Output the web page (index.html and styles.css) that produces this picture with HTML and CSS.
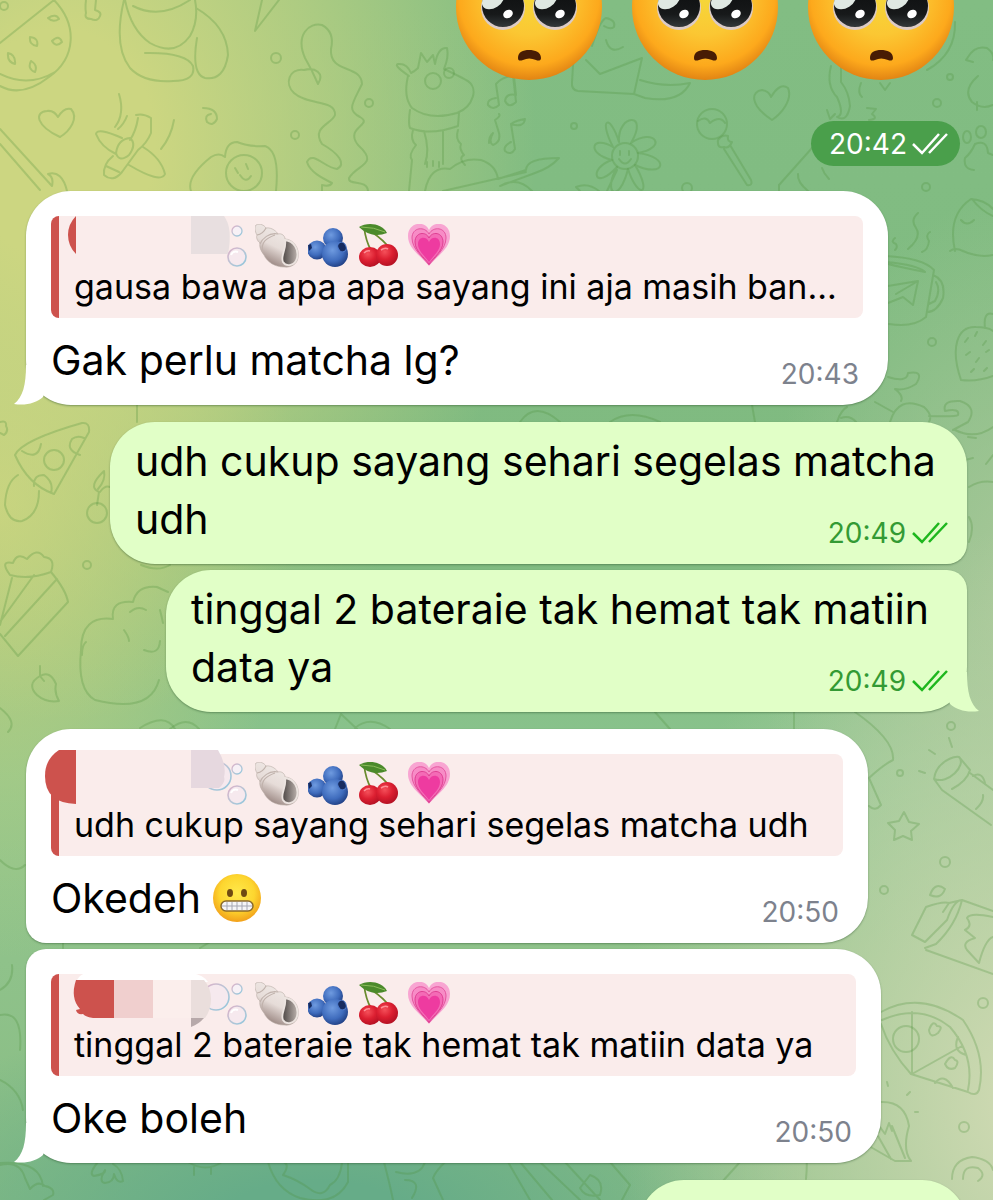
FILE: index.html
```
<!DOCTYPE html>
<html lang="id">
<head>
<meta charset="utf-8">
<meta name="viewport" content="width=device-width, initial-scale=1">
<title>Chat</title>
<link rel="stylesheet" href="styles.css">
</head>
<body>
<svg class="defs" width="0" height="0" aria-hidden="true">
  <defs>
    <radialGradient id="skin" cx=".5" cy=".42" r=".6">
      <stop offset="0" stop-color="#f5d83a"/><stop offset=".45" stop-color="#fbc733"/><stop offset=".8" stop-color="#fda91c"/><stop offset="1" stop-color="#dc7d12"/>
    </radialGradient>
    <linearGradient id="eye" x1="0" y1="0" x2="0" y2="1">
      <stop offset="0" stop-color="#0b0d0e"/><stop offset=".7" stop-color="#17191a"/><stop offset="1" stop-color="#33383a"/>
    </linearGradient>
    <radialGradient id="smile" cx=".5" cy=".4" r=".6">
      <stop offset="0" stop-color="#ffe94b"/><stop offset=".6" stop-color="#fdd62f"/><stop offset="1" stop-color="#f2a01a"/>
    </radialGradient>
    <linearGradient id="shellFill" x1=".8" y1="0" x2=".3" y2="1">
      <stop offset="0" stop-color="#f3eeeb"/><stop offset=".55" stop-color="#e6dcd8"/><stop offset="1" stop-color="#8c7772"/>
    </linearGradient>
    <linearGradient id="shellHole" x1="0" y1="0" x2="1" y2="0">
      <stop offset="0" stop-color="#4b4543"/><stop offset="1" stop-color="#bcb2ad"/>
    </linearGradient>
    <radialGradient id="berry" cx=".4" cy=".35" r=".7">
      <stop offset="0" stop-color="#6f9be0"/><stop offset=".6" stop-color="#3f6cbd"/><stop offset="1" stop-color="#1e3c80"/>
    </radialGradient>
    <radialGradient id="cherry" cx=".4" cy=".35" r=".7">
      <stop offset="0" stop-color="#f5505a"/><stop offset=".5" stop-color="#dc1f31"/><stop offset="1" stop-color="#b00f22"/>
    </radialGradient>
    <linearGradient id="bubbleRim" x1="0" y1="0" x2="1" y2="1">
      <stop offset="0" stop-color="#dfb0c8"/><stop offset=".5" stop-color="#b9c6d6"/><stop offset="1" stop-color="#8fc6dc"/>
    </linearGradient>
    <symbol id="pleading" viewBox="0 0 146 146">
      <circle cx="73" cy="73" r="73" fill="url(#skin)"/>
      <circle cx="47" cy="74" r="22" fill="#dccbc6"/><circle cx="99" cy="74" r="22" fill="#dccbc6"/>
      <circle cx="47" cy="72" r="21" fill="url(#eye)"/><circle cx="99" cy="72" r="21" fill="url(#eye)"/>
      <ellipse cx="37" cy="66" rx="12" ry="8" fill="#dfe8e2" transform="rotate(-32 37 66)"/>
      <ellipse cx="90" cy="66" rx="12" ry="8" fill="#dfe8e2" transform="rotate(-32 90 66)"/>
      <ellipse cx="52" cy="80" rx="5" ry="4" fill="#fff" transform="rotate(-30 52 80)"/>
      <ellipse cx="104" cy="80" rx="5" ry="4" fill="#fff" transform="rotate(-30 104 80)"/>
      <path d="M62 124C62 118 67 116 73 116S85 118 85 124C85 127 82 127 80 126Q73 123 67 126C64 127 62 127 62 124Z" fill="#481c04"/>
    </symbol>
    <symbol id="grimace" viewBox="0 0 48 48">
      <circle cx="24" cy="24" r="24" fill="url(#smile)"/>
      <ellipse cx="17" cy="19" rx="3" ry="4" fill="#6f4a12"/><ellipse cx="31" cy="19" rx="3" ry="4" fill="#6f4a12"/>
      <rect x="8" y="27" width="32" height="10" rx="5" fill="#f5f5f7" stroke="#8a6a2c" stroke-width="1.5"/>
      <path d="M9 32H39M14 28V36M19 28V36M24 28V36M29 28V36M34 28V36" stroke="#a5a7b3" fill="none"/>
    </symbol>
    <symbol id="bubbleSmall" viewBox="0 0 30 44">
      <circle cx="18" cy="7" r="5" fill="#f7f1f6" stroke="url(#bubbleRim)" stroke-width="1.3"/>
      <circle cx="18" cy="33" r="9" fill="#f6e9ee" stroke="url(#bubbleRim)" stroke-width="1.6"/>
      <path d="M12 31C13 28 16 27 19 28" fill="none" stroke="#fff" stroke-width="2"/>
    </symbol>
    <symbol id="shell" viewBox="0 0 44 44">
      <path d="M1 1C5-1 9 1 11 4C17 3 22 8 23 10C27 9 30 12 30 15C38 15 45 24 43 34C42 40 36 44 29 43C20 43 12 38 9 31C6 27 4 23 5 19C2 17 1 13 2 11C0 8-1 3 1 1Z" fill="url(#shellFill)" stroke="#b9aca6" stroke-width=".6"/>
      <path d="M2 11Q8 10 11 4M5 20C7 15 14 8 23 10M8 28C5 18 12 14 20 11" fill="none" stroke="#c0b2ac" stroke-width="1.1"/>
      <path d="M30 16C39 17 44 26 42 34C40 42 31 43 28 38C25 32 32 25 30 16Z" fill="url(#shellHole)" stroke="#ece4e0" stroke-width="1.8"/>
    </symbol>
    <symbol id="berries" viewBox="0 0 40 40">
      <circle cx="25" cy="10" r="10" fill="url(#berry)"/>
      <circle cx="9" cy="22" r="9.5" fill="url(#berry)"/><path d="M0 17L3 16L4 20L1 23Z" fill="#152c63"/>
      <circle cx="27" cy="26" r="13" fill="url(#berry)"/><ellipse cx="34" cy="19" rx="4" ry="5" fill="#162b60" stroke="#4d7acb" transform="rotate(-25 34 19)"/>
    </symbol>
    <symbol id="cherries" viewBox="0 0 40 44">
      <path d="M5 3Q7 18 12 26M5 3Q20 12 28 21" fill="none" stroke="#6a8b2e" stroke-width="1.8"/>
      <path d="M0 3C8-2 23-1 28 9C18 13 8 11 0 3Z" fill="#4b8a2b"/><path d="M2 3Q15 3 26 8" stroke="#8cbc5c" fill="none"/>
      <ellipse cx="11" cy="33" rx="11" ry="10" fill="url(#cherry)"/><ellipse cx="28" cy="31" rx="11" ry="11" fill="url(#cherry)"/>
      <path d="M5 29Q8 26 11 27M22 26Q26 23 29 25" stroke="#ff8e95" stroke-width="1.6" fill="none"/>
    </symbol>
    <symbol id="heart" viewBox="0 0 42 42">
      <path d="M21 42C14 33 0 25 0 12C0-2 17-4 21 6C25-4 42-2 42 12C42 25 28 33 21 42Z" fill="#f8a5d2"/>
      <path d="M21 41C15 33 4 25 4 14C4 3 17 2 21 10C25 2 38 3 38 14C38 25 27 33 21 41Z" fill="#f78cc6" stroke="#e5559f"/>
      <path d="M21 40C16 33 7 27 7 18C7 8 18 7 21 14C24 7 35 8 35 18C35 27 26 33 21 40Z" fill="#f46bb6" stroke="#df3f92"/>
      <path d="M21 38C17 32 10 27 10 20C10 12 19 12 21 18C23 12 32 12 32 20C32 27 25 32 21 38Z" fill="#ee3ba0"/>
    </symbol>
    <symbol id="emojiSet" viewBox="0 0 240 46">
      <use href="#bubbleSmall" x="0" y="1" width="30" height="44"/>
      <use href="#shell" x="36" y="1" width="44" height="44"/>
      <use href="#berries" x="89" y="5" width="40" height="40"/>
      <use href="#cherries" x="140" y="1" width="40" height="44"/>
      <use href="#heart" x="189" y="1" width="42" height="42"/>
    </symbol>
    <symbol id="ticks" viewBox="0 0 36 22">
      <path d="M1 11L10 20L27 1M17 20L35 1" fill="none" stroke="currentColor" stroke-width="2.5"/>
    </symbol>
    <symbol id="tail" viewBox="0 0 40 40">
      <path d="M12 0C12 20 9 32 0 39C12 41 22 38 29 32L40 0Z" fill="currentColor"/>
    </symbol>
  </defs>
</svg>

<main class="chat">
  <svg class="doodles" viewBox="0 0 993 1200" preserveAspectRatio="xMidYMin slice" aria-hidden="true">
    <!-- watermelon, dog, cone -->
    <path d="M0 43L54 0C78 25 76 58 49 77Q22 98 0 86M0 74Q28 88 55 72M48 18q8-5 11 1q-6 4-11-1M30 37q9 1 7 9q-8-1-7-9M52 41q7-7 10 1q-6 6-10-1M8 53q8 2 7 11q-8-2-7-11M31 61q7 4 4 11q-8-3-4-11M86 0q-1 8 0 13q-2 6 5 6q7 3 9-3q2-4-5-6l1-10"/>
    <path d="M124 0Q113 46 130 68Q144 83 173 81Q196 81 193 66Q186 52 145 53M125 0Q131 30 150 43Q175 57 190 36Q199 20 195 0M133 6Q160 20 190 0M196 8Q227 26 228 55Q224 81 205 78Q191 74 197 38M262 0L255 31L279 0"/>
    <circle cx="276" cy="58" r="5"/><circle cx="295" cy="135" r="4"/><circle cx="369" cy="103" r="4"/><circle cx="4" cy="6" r="4"/>
    <!-- heart, plane, swirl -->
    <path d="M60 137C36 126 34 112 47 111Q54 110 58 117Q64 107 71 109C79 118 70 131 60 137M119 94Q125 114 115 127M127 116Q124 124 118 129M174 120Q171 137 161 149M203 108q14 0 14 11q-4 8-10 3q-3-7 4-8"/>
    <path d="M122 138Q97 127 96 134Q101 147 116 154M136 115Q143 113 151 118V133Q147 143 138 150L122 172Q113 183 104 175Q103 164 113 156M138 118Q136 131 130 140M116 153Q118 139 130 138Q137 144 129 155Q119 163 116 153M106 166L119 172M143 147Q161 158 165 174Q161 184 129 165"/>
    <!-- sweet, egg, coral -->
    <path d="M0 129L52 186M0 144L40 190M52 186Q54 177 48 174Q62 170 67 191M191 191Q186 177 211 157Q219 152 225 157Q226 142 237 142Q249 147 265 146Q280 151 276 191"/>
    <circle cx="244" cy="173" r="18"/><path d="M235 168l3 5M246 164l2 5M240 175q6 9 11 1"/>
    <path d="M318 84Q312 70 305 58C295 35 309 22 322 25Q335 32 331 49C329 74 361 64 362 84C353 103 346 110 360 117C374 125 344 127 358 145C380 165 357 164 349 178C348 186 367 179 368 191M318 84C325 73 315 67 304 70C289 68 284 84 294 93C308 106 336 99 335 115C332 124 311 127 322 144C338 153 347 164 337 169C325 168 312 150 307 162C310 172 322 178 332 183Q330 187 322 185V191"/>
    <!-- llama and guitar -->
    <path d="M409 76Q393 65 398 64Q407 63 411 73Q415 71 418 68L421 53L427 62L433 55L435 64Q438 47 447 48Q449 57 444 69Q459 76 466 80C480 87 473 107 457 113Q430 121 412 108Q403 97 408 76M410 110Q408 124 410 128Q430 136 458 126L459 113M413 130Q410 140 416 145Q408 155 412 160Q410 180 409 191M424 131Q430 150 425 164M443 131V164M427 162v5M433 161v5M439 162v5M458 130Q455 139 461 144Q459 149 464 155Q458 158 465 165"/>
    <circle cx="433" cy="81" r="8"/><circle cx="449" cy="73" r="5"/>
    <path d="M425 191Q430 165 450 169Q464 157 481 160Q496 165 498 179L526 170Q526 158 559 158Q550 168 535 173L500 186Q518 176 532 191M443 191L526 172"/>
    <!-- notes, envelope, bird -->
    <path d="M496 98q-9 1-8 7q5 6 11 0l-3-21q7-8 18-8l2 19q-10-2-11 6q4 8 11 1l-3-27M493 133q-5 9 0 12q8-3 6-12l-4-13q6-4 4-6M493 133q-4 3-4 10M511 142q-8 4-6 9q6 5 10-2l-4-25q13 4 14-5q-8 1-14 5"/>
    <circle cx="574" cy="126" r="3"/>
    <path d="M574 50L572 82Q571 90 578 91L634 94L642 58L600 74L586 60M640 80Q665 88 690 83Q680 104 645 98L634 94M592 46Q600 20 606 18Q616 20 614 27Q610 30 604 26M606 40Q610 55 623 47"/>
    <!-- flower, lollipop, heart -->
    <circle cx="625" cy="156" r="13"/><path d="M613 147C598 118 610 113 619 142C617 114 650 111 631 143C655 127 668 148 638 153C671 157 665 179 635 165C653 195 638 200 628 169C619 205 602 194 617 167C594 192 588 168 612 160C586 154 591 134 613 147M620 151v4M629 151v4M619 159q6 9 12 0M617 170L607 191M576 187Q588 182 599 191M576 187L580 191"/>
    <circle cx="712" cy="124" r="15"/><path d="M698 121q8-6 12 2q10-8 15 0M718 140q5-6 10-4q-1 6 4 6q-3 7-8 5q-7 2-6-7M724 149L747 185q6 1 4-5L730 145M772 120C748 104 752 91 762 90Q769 91 771 97Q780 82 788 88C793 100 781 114 772 120"/>
    <circle cx="687" cy="188" r="5"/><circle cx="950" cy="77" r="3"/><circle cx="937" cy="103" r="4"/>
    <!-- party, cone, chick, paw -->
    <path d="M831 66Q826 86 837 97Q845 115 837 117Q847 123 850 106Q849 92 841 82V66M861 83q-4 10 1 14M880 83l5 7l5-7M827 110l3 9l5-5M867 108l9 1l-4 5q7 5-3 6M955 22Q956 54 927 70M779 191V185L812 148M798 174Q797 182 808 191M822 168Q824 174 829 179"/>
    <path d="M968 57q7-12 19-9q8 6 6 12M968 57l-2 3l7 2M978 76Q962 90 972 102Q982 110 993 105M977 102v8M974 170Q963 169 965 158Q971 153 975 144Q987 139 988 153L993 155"/>
    <ellipse cx="967" cy="137" rx="4" ry="6"/><ellipse cx="981" cy="132" rx="5" ry="6"/><circle cx="926" cy="187" r="4"/>
    <!-- mug, bag, strawberry -->
    <path d="M918 213q-8 7-2 15q6 9-8 21M895 238q-5 4 1 6q2 3-1 6M930 232q-5 3-1 9q-1 9-7 11M886 256Q923 258 934 270L926 317Q913 328 889 324M886 262Q918 265 925 272Q900 267 888 264M933 275Q946 280 943 298Q937 312 927 312M936 282Q941 290 935 301L929 304M888 286L918 281L913 305L903 297L888 303M918 281L896 294"/>
    <path d="M955 251Q947 215 971 199Q985 200 993 209M972 199Q981 211 993 216M950 251Q955 247 963 251Q978 258 993 255M961 220q6 7 13 0M961 380C950 348 957 326 976 327Q988 327 993 331M961 380Q977 382 993 376M985 328Q983 311 993 314M965 342l3-4M975 336l2-4M983 345l3-4M966 355l4-3M976 362l3-4M986 352l3-2M971 372l3-3M984 371l3-3"/>
    <circle cx="932" cy="342" r="4"/>
    <!-- pizza slice, cherries, cake -->
    <path d="M15 455Q22 440 82 423Q90 422 89 432L54 494Q28 485 15 455M22 451Q38 461 41 444M80 455Q65 450 72 439Q77 435 84 438M34 486Q33 475 44 475Q54 482 51 493M0 422q7-2 6 4q3 5-2 9l-4-2M18 475Q6 482 5 505Q9 523 22 521Q39 515 39 491"/>
    <circle cx="54" cy="460" r="10"/>
    <circle cx="97" cy="513" r="10"/><path d="M97 505L99 492Q87 487 104 471Q106 480 98 489M100 492Q105 485 110 487"/><circle cx="87" cy="565" r="4"/>
    <path d="M10 575Q-1 560 13 563Q17 552 27 559Q37 547 44 557Q56 558 51 572Q29 580 10 575M12 578L0 625M34 575L0 622M51 572Q66 590 68 602L18 656L0 634M57 579L5 636M40 666v10l4 5M40 676q-14 8-3 19Q46 703 59 701Q54 692 56 684Q50 670 40 676M0 708Q18 722 8 732"/>
    <!-- cauliflower -->
    <path d="M113 619Q110 600 133 602Q137 585 157 587L168 592M113 619Q81 615 81 650Q77 690 95 700Q150 714 159 680M130 612q8-7 16-2M82 655q0-10 4-13M124 630q5 7 5 11M160 610q2 8 3 13M144 650q15 6 16-9M140 728Q165 712 175 729M141 565Q158 572 170 565"/>
    <!-- shapes around the middle bubbles -->
    <path d="M888 377Q907 383 908 373Q925 370 916 384Q905 391 895 389Q904 396 901 401M837 422Q841 410 847 407M841 418Q850 415 856 422M875 402l18 10M890 422Q898 395 924 407Q933 415 929 422M929 416Q956 417 958 415Q960 408 945 411Q942 400 960 401Q978 407 968 422L953 430M955 430Q975 440 993 427M968 437l8 1M969 487Q980 480 993 482M965 460l8-2M993 455l-7 9M969 517q6 10 0 25M137 405V422M520 422Q535 400 560 422M610 422q20-14 50 0M752 405L755 422"/>
    <!-- torch, star, milk -->
    <circle cx="951" cy="726" r="4"/><circle cx="900" cy="773" r="3"/><circle cx="884" cy="890" r="4"/><circle cx="945" cy="862" r="5"/>
    <path d="M949 738l3 9M929 750l6 4M919 771l6 2M934 779L942 790L991 825M934 779C936 762 955 755 959 757L970 770Q967 781 952 789M934 779C948 785 967 765 959 757M970 773L993 790M973 776q9-5 12 7M983 795Q984 802 976 809M904 812L909 822L919 824L911 831L912 840L903 836L894 840L895 830L888 823L899 821Z"/>
    <path d="M855 712Q895 740 893 760Q883 765 869 778M869 778L881 805Q875 812 869 806M930 895Q935 881 945 889Q941 900 930 895M912 935L926 907Q943 901 949 903L962 900L993 911M912 935L925 942L947 920Q954 900 962 900M925 948L936 944Q956 925 962 900M926 950L993 974M943 912L949 903M993 917Q970 912 967 918Q973 926 965 930L975 938Q961 942 967 950L979 963Q985 940 993 937"/>
    <!-- pizza, bulb, lollipop -->
    <path d="M881 1012Q920 990 963 1020Q987 1055 979 1090Q976 1097 968 1092L911 1074Q890 1051 881 1024M882 1020Q920 1003 950 1027Q975 1056 968 1090M912 1012V1074L962 1046M958 1037Q952 1051 966 1055M935 1083Q944 1072 953 1088M929 1030q4-11 8-4q7 0 1 7q-8 6-9-3M945 1064q6-11 10-4q5 1 0 8q-7 3-10-4"/>
    <circle cx="906" cy="1039" r="13"/><circle cx="983" cy="1003" r="5"/><circle cx="964" cy="1127" r="5"/>
    <path d="M881 1102Q905 1101 909 1126Q902 1150 911 1161H895L862 1142M878 1136L891 1159M892 1126L905 1158M879 1132l1-5l5 7l4-11l3 8M907 1095l3-3M887 1082l1 4M915 1112h3M805 1147Q808 1158 806 1179M952 1179Q952 1160 972 1157Q990 1159 993 1170M963 1179q0-15 15-11q9 7 0 13"/>
    <!-- bottom row -->
    <path d="M0 1165Q20 1160 25 1178L30 1189Q38 1180 45 1186Q55 1188 53 1195L44 1200M0 1163Q40 1160 43 1186M98 1162Q88 1174 94 1176Q106 1174 105 1170Q98 1182 105 1183Q114 1182 114 1174Q117 1184 123 1181Q122 1169 113 1164M188 1162Q206 1173 222 1162M194 1167v8M211 1167v7M268 1162Q276 1190 300 1198Q335 1207 348 1182V1162M283 1175Q290 1165 284 1162M283 1175Q298 1180 310 1189Q323 1199 330 1185Q340 1180 342 1163M384 1162Q390 1185 393 1200M445 1162Q435 1172 433 1178L443 1200M396 1172Q420 1178 425 1162M405 1180Q423 1180 412 1198M508 1162L530 1200M520 1162L552 1200M540 1162L580 1200M565 1162L600 1200M590 1175Q605 1180 600 1195Q585 1198 580 1188L590 1175M610 1162L630 1185L622 1200M740 1162L722 1182"/>
    <path d="M0 860Q15 875 25 865M0 1015Q23 1010 20 1050M0 1080Q20 1090 23 1110M0 990q14-8 12-25M170 729Q187 715 199 729M335 729l6-15l16 15M355 728Q370 715 390 729M655 712Q669 728 670 729M794 712V729M63 942V948M210 942l-10 6"/>
  </svg>

  <section class="reaction" role="img" aria-label="🥺🥺🥺">
    <svg class="face"><use href="#pleading"/></svg>
    <svg class="face"><use href="#pleading"/></svg>
    <svg class="face"><use href="#pleading"/></svg>
  </section>
  <div class="stamp"><time>20:42</time><svg class="ticks" aria-label="Read"><use href="#ticks"/></svg></div>

  <article class="bubble in first has-tail wide">
    <blockquote class="quote">
      <svg class="sender" viewBox="0 0 410 48" aria-hidden="true">
        <use href="#emojiSet" x="168" y="7" width="240" height="46"/>
        <path d="M25 0V38Q17 30 17 19T25 0Z" fill="#cd524d"/>
        <path d="M140 0H173Q182 12 177 38H140Z" fill="#e8dfe0"/>
      </svg>
      <p class="quoted">gausa bawa apa apa sayang ini aja masih ban...</p>
    </blockquote>
    <div class="body"><p class="text">Gak perlu matcha lg?</p><div class="meta"><time>20:43</time></div></div>
    <svg class="tail"><use href="#tail"/></svg>
  </article>

  <article class="bubble out upper long">
    <div class="body"><p class="text">udh cukup sayang sehari segelas matcha udh</p><div class="meta"><time>20:49</time><svg class="ticks" aria-label="Read"><use href="#ticks"/></svg></div></div>
  </article>
  <article class="bubble out lower has-tail medium">
    <div class="body"><p class="text">tinggal 2 bateraie tak hemat tak matiin data ya</p><div class="meta"><time>20:49</time><svg class="ticks" aria-label="Read"><use href="#ticks"/></svg></div></div>
    <svg class="tail"><use href="#tail"/></svg>
  </article>

  <article class="bubble in upper reply-a">
    <blockquote class="quote">
      <svg class="sender" viewBox="0 0 410 48" aria-hidden="true">
        <use href="#emojiSet" x="168" y="7" width="240" height="46"/>
        <circle cx="166" cy="22" r="14" fill="#f6e9ee" stroke="url(#bubbleRim)" stroke-width="1.6"/>
        <path d="M25-4H140V0H25Z" fill="#faeceb"/>
        <path d="M8-4H25V50Q-6 49-6 22Q-6 5 8-4Z" fill="#cd524d"/>
        <path d="M140-4H167Q176 11 173 23Q175 28 168 34H140Z" fill="#e6d8df"/>
      </svg>
      <p class="quoted">udh cukup sayang sehari segelas matcha udh</p>
    </blockquote>
    <div class="body"><p class="text">Okedeh <svg class="emoji" role="img" aria-label="😬"><use href="#grimace"/></svg></p><div class="meta"><time>20:50</time></div></div>
  </article>
  <article class="bubble in lower has-tail reply-b">
    <blockquote class="quote">
      <svg class="sender" viewBox="0 0 410 48" aria-hidden="true">
        <use href="#emojiSet" x="168" y="7" width="240" height="46"/>
        <circle cx="165" cy="23" r="13" fill="#f6e9ee" stroke="url(#bubbleRim)" stroke-width="1.6"/>
        <path d="M26 6Q29 0 36-1H140Q153 1 157 8H26Z" fill="#fff"/>
        <path d="M25 6H63V44H42Q35 43 32 40Q26 41 25 36L29 35Q19 24 25 6Z" fill="#cd524d"/>
        <path d="M63 6H102V44H63Z" fill="#f0cfce"/><path d="M102 6H140V44H102Z" fill="#fbeeec"/>
        <path d="M140 6H153Q160 14 160 25Q160 36 154 44H140Z" fill="#eadedc"/><path d="M140 44H153Q148 50 140 53Z" fill="#b7a9aa"/>
      </svg>
      <p class="quoted">tinggal 2 bateraie tak hemat tak matiin data ya</p>
    </blockquote>
    <div class="body"><p class="text">Oke boleh</p><div class="meta"><time>20:50</time></div></div>
    <svg class="tail"><use href="#tail"/></svg>
  </article>

  <article class="bubble out next short"></article>
</main>
</body>
</html>
```
FILE: styles.css
```
* { box-sizing: border-box; }
body { margin: 0; }
p, blockquote { margin: 0; }
.defs { position: absolute; }

.chat {
  position: relative;
  isolation: isolate;
  display: flex;
  flex-direction: column;
  align-items: flex-start;
  height: 100vh;
  padding: 0 26px;
  overflow: hidden;
  color: #000;
  font-family: Inter, "Liberation Sans", sans-serif;
  background:
    radial-gradient(ellipse 48% 48% at 6% 12%, #ccd681 20%, rgba(204, 214, 129, .6) 55%, rgba(204, 214, 129, 0) 100%),
    radial-gradient(ellipse 30% 38% at 0% 42%, #c4d27e 0%, rgba(196, 210, 126, 0) 100%),
    radial-gradient(ellipse 42% 48% at 104% 92%, #cbd8b0 10%, rgba(203, 216, 176, 0) 100%),
    radial-gradient(ellipse 28% 34% at 104% 50%, #abc99b 0%, rgba(171, 201, 155, 0) 100%),
    radial-gradient(ellipse 50% 18% at 32% 102%, #66ac88 20%, rgba(102, 172, 136, 0) 100%),
    linear-gradient(#82bd83 0%, #7fba80 45%, #8bc48e 65%, #8fc28a 80%, #88bd84 100%);
}

.doodles {
  position: absolute;
  inset: 0;
  z-index: -1;
  width: 100%;
  height: 100%;
  fill: none;
  stroke: #4c8f3c;
  stroke-opacity: .27;
  stroke-width: 2;
  stroke-linecap: round;
  stroke-linejoin: round;
}

.reaction {
  display: flex;
  flex: none;
  align-items: flex-end;
  align-self: flex-end;
  gap: 30px;
  height: 80px;
  margin-right: 13px;
}
.face { flex: none; width: 146px; height: 146px; }

.stamp {
  display: flex;
  flex: none;
  align-items: center;
  align-self: flex-end;
  gap: 5px;
  height: 45px;
  margin: 41px 7px 25px 0;
  padding: 0 12px 0 18px;
  border-radius: 23px;
  background: #4a9f4b;
  color: #fff;
  font-size: 28px;
}

.ticks { flex: none; width: 36px; height: 22px; }

.bubble {
  position: relative;
  flex: none;
  max-width: 100%;
  padding: 25px 25px 16px;
  border-radius: 45px;
  background: currentColor;
  box-shadow: 0 1px 2px rgba(40, 80, 40, .45);
}
.in { color: #fff; }
.out { align-self: flex-end; padding-top: 10px; color: #e1ffc7; }
.first { margin-bottom: 17px; }
.upper { margin-bottom: 6px; }
.lower { margin-bottom: 17px; }
.in.upper { border-bottom-left-radius: 20px; }
.in.lower { border-top-left-radius: 20px; }
.out.upper { border-bottom-right-radius: 20px; }
.out.lower { border-top-right-radius: 20px; }
.wide { width: 862px; }
.long { width: 857px; }
.medium { width: 801px; }
.reply-a { width: 842px; }
.reply-b { width: 855px; }
.short { width: 328px; height: 142px; }

.tail { position: absolute; bottom: 0; left: -12px; width: 40px; height: 40px; }
.out .tail { right: -12px; left: auto; transform: scaleX(-1); }

.quote {
  height: 102px;
  margin-bottom: 13px;
  border-left: 8px solid #cd524d;
  border-radius: 8px;
  background: #faeceb;
  color: #000;
}
.sender { display: block; width: 410px; height: 48px; margin-left: -8px; overflow: visible; }
.quoted {
  padding-left: 15px;
  font-size: 34px;
  line-height: 46px;
  white-space: nowrap;
}

.body { position: relative; z-index: 1; display: grid; color: #000; }
.body > * { grid-area: 1 / 1; }
.text { font-size: 41px; line-height: 58px; }
.emoji { width: 48px; height: 48px; margin: -6px 0; vertical-align: -3px; }
.meta {
  display: flex;
  align-items: center;
  align-self: end;
  justify-self: end;
  gap: 6px;
  margin-right: 4px;
  color: #7d828d;
  font-size: 28px;
  line-height: 30px;
}
.out .meta { margin-right: -6px; color: #339a34; }
.out .ticks { color: #1eb71e; }
```
